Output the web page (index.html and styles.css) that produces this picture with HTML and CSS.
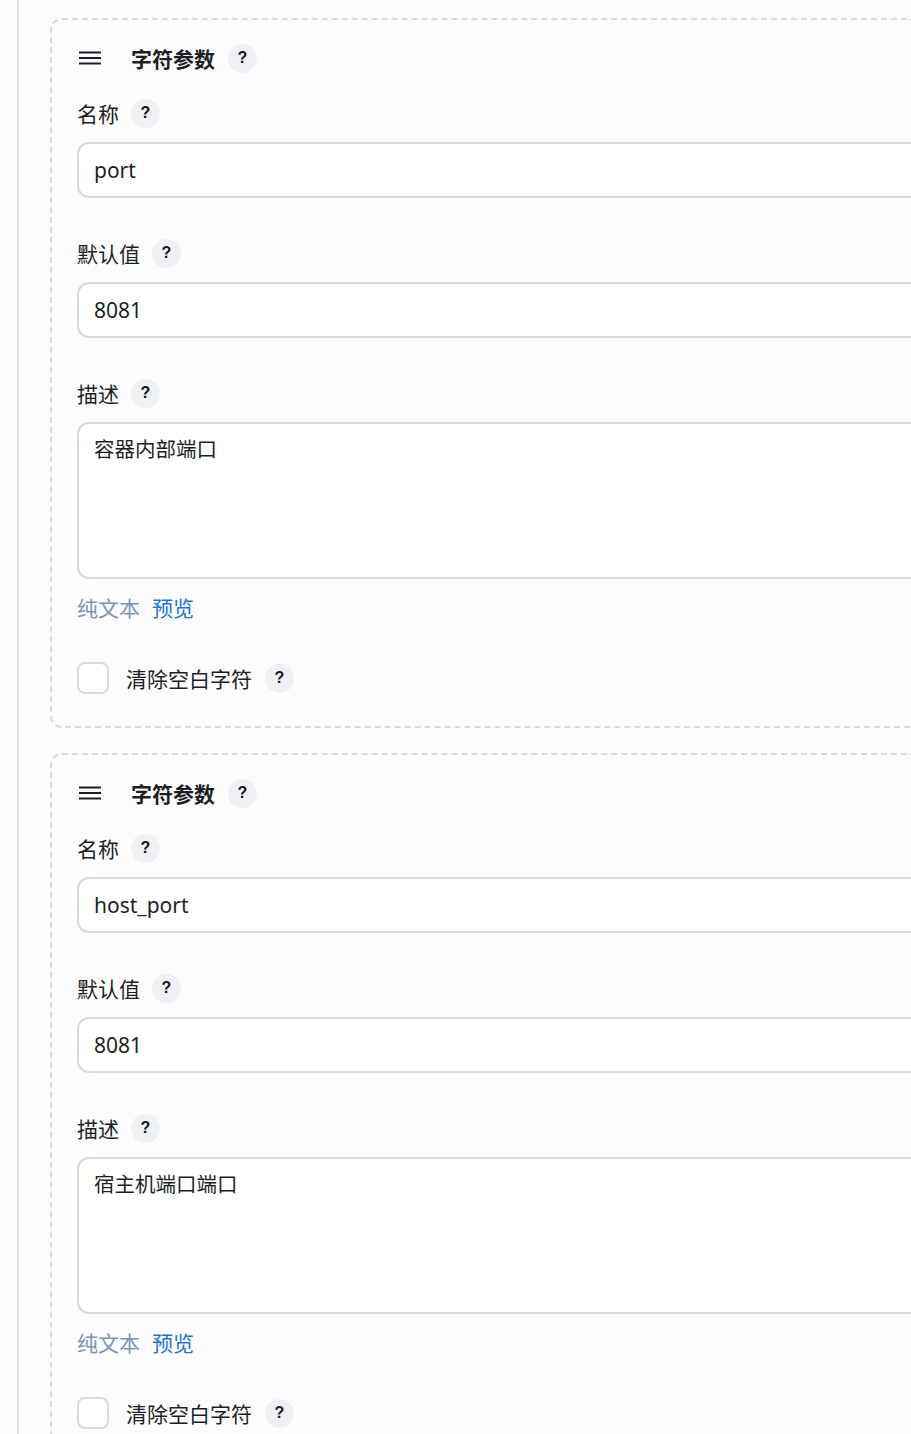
FILE: index.html
```html
<!DOCTYPE html>
<html lang="zh">
<head>
<meta charset="utf-8">
<title>字符参数</title>
<link rel="stylesheet" href="styles.css">
</head>
<body>
<div class="rail">
  <section class="card">
    <div class="title-row">
      <svg class="handle" width="22" height="14" viewBox="0 0 22 14"><path d="M0 1.5H22M0 7H22M0 12.5H22" stroke="#1d1f24" stroke-width="2"/></svg>
      <span class="title">字符参数</span>
      <span class="help">?</span>
    </div>
    <div class="label-row"><span>名称</span><span class="help">?</span></div>
    <input class="field" type="text" value="port">
    <div class="label-row gap"><span>默认值</span><span class="help">?</span></div>
    <input class="field" type="text" value="8081">
    <div class="label-row gap"><span>描述</span><span class="help">?</span></div>
    <textarea class="field area">容器内部端口</textarea>
    <div class="links"><a class="plain">纯文本</a><a class="preview">预览</a></div>
    <label class="check-row"><span class="box"></span><span>清除空白字符</span><span class="help">?</span></label>
  </section>
  <section class="card">
    <div class="title-row">
      <svg class="handle" width="22" height="14" viewBox="0 0 22 14"><path d="M0 1.5H22M0 7H22M0 12.5H22" stroke="#1d1f24" stroke-width="2"/></svg>
      <span class="title">字符参数</span>
      <span class="help">?</span>
    </div>
    <div class="label-row"><span>名称</span><span class="help">?</span></div>
    <input class="field" type="text" value="host_port">
    <div class="label-row gap"><span>默认值</span><span class="help">?</span></div>
    <input class="field" type="text" value="8081">
    <div class="label-row gap"><span>描述</span><span class="help">?</span></div>
    <textarea class="field area">宿主机端口端口</textarea>
    <div class="links"><a class="plain">纯文本</a><a class="preview">预览</a></div>
    <label class="check-row"><span class="box"></span><span>清除空白字符</span><span class="help">?</span></label>
  </section>
</div>
</body>
</html>
```
FILE: styles.css
```css
html, body {
  margin: 0;
  padding: 0;
  background: #fcfcfd;
  overflow: hidden;
}
body {
  width: 911px;
  height: 1434px;
  font-family: "Noto Sans", "Noto Sans CJK SC", sans-serif;
  font-size: 21px;
  color: #1d1f24;
}
.rail {
  margin-left: 17px;
  border-left: 2px solid #dfe0e6;
  padding: 18px 0 0 31px;
  height: 1434px;
  box-sizing: border-box;
  overflow: hidden;
}
.card {
  border: 2px dashed #d9dbe2;
  border-right: none;
  border-radius: 12px 0 0 12px;
  padding: 24px 0 32px 25px;
  margin-bottom: 25px;
  display: flex;
  flex-direction: column;
  align-items: stretch;
}
.title-row,
.label-row,
.links,
.check-row {
  align-self: flex-start;
}
.title-row {
  display: flex;
  align-items: center;
  height: 28px;
}
.handle {
  margin-left: 2px;
  margin-right: 30px;
}
.title {
  font-weight: 700;
  font-family: "Noto Sans CJK SC", sans-serif;
  line-height: 28px;
}
.help {
  display: inline-flex;
  align-items: center;
  justify-content: center;
  width: 29px;
  height: 29px;
  border-radius: 50%;
  background: #eef0f4;
  font-size: 16px;
  font-weight: 700;
  font-family: "Liberation Sans", sans-serif;
  color: #14161a;
  margin-left: 13px;
}
.label-row {
  display: flex;
  align-items: center;
  height: 28px;
  margin-top: 27px;
  font-family: "Noto Sans CJK SC", sans-serif;
}
.label-row.gap {
  margin-top: 41px;
}
.label-row .help {
  margin-left: 12px;
}
.field {
  display: block;
  margin-top: 15px;
  width: 100%;
  height: 56px;
  box-sizing: border-box;
  border: 2px solid #d7dae3;
  border-right: none;
  border-radius: 12px 0 0 12px;
  background: #fff;
  padding: 0 15px;
  font-family: "Noto Sans", "Noto Sans CJK SC", sans-serif;
  font-size: 21px;
  color: #1d1f24;
  outline: none;
}
.area {
  height: 157px;
  padding-top: 10px;
  line-height: 28px;
  resize: none;
  font-family: "Noto Sans CJK SC", sans-serif;
  font-size: 20.5px;
}
.links {
  margin-top: 14px;
  height: 28px;
  line-height: 28px;
  display: flex;
  gap: 12px;
  font-family: "Noto Sans CJK SC", sans-serif;
}
.plain {
  color: #7a93b6;
}
.preview {
  color: #1e74d6;
}
.check-row {
  display: flex;
  align-items: center;
  margin-top: 41px;
  height: 32px;
  font-family: "Noto Sans CJK SC", sans-serif;
}
.box {
  width: 32px;
  height: 32px;
  box-sizing: border-box;
  border: 2px solid #d8dbe4;
  border-radius: 8px;
  background: #fff;
  margin-right: 17px;
}
.check-row .help {
  margin-left: 13px;
}
```
